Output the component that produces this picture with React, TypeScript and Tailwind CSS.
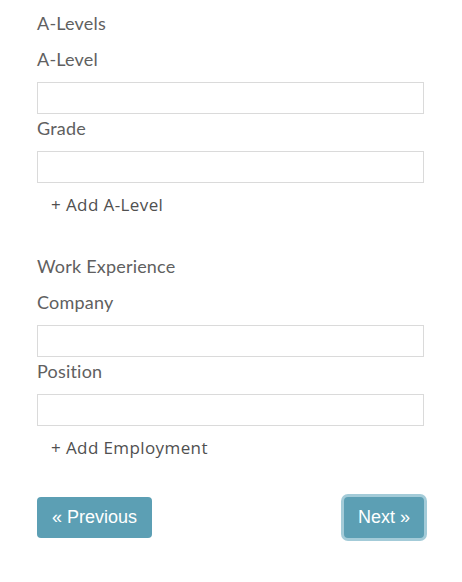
import React from 'react';

const label = "block text-[18px] leading-[21px] tracking-[0.2px] text-[#606060] font-['Lato',sans-serif]";
const input = 'block w-full h-8 border border-[#dadada] bg-white outline-none';
const addLink = "pl-[14px] text-[17px] leading-[22px] tracking-[0.4px] text-[#505050] font-['Open_Sans',sans-serif]";

const Section = ({ title, fields, add }: { title: string; fields: string[]; add: string }) => (
  <div>
    <h3 className={`${label} mb-[15px]`}>{title}</h3>
    {fields.map((f, i) => (
      <div key={i} className={i > 0 ? 'mt-1' : ''}>
        <label className={`${label} mb-[12px]`}>{f}</label>
        <input className={input} />
      </div>
    ))}
    <div className={`${addLink} mt-[11px]`}>+ {add}</div>
  </div>
);

const App = () => {
  return (
    <div className="bg-white min-h-screen px-[37px] pr-[38px] pt-[13px]">
      <Section title="A-Levels" fields={['A-Level', 'Grade']} add="Add A-Level" />
      <div className="mt-10">
        <Section title="Work Experience" fields={['Company', 'Position']} add="Add Employment" />
      </div>
      <div className="mt-[38px] flex justify-between items-center">
        <button className="h-[41px] px-[15px] rounded bg-[#5c9fb4] text-white text-[18px] font-['Liberation_Sans',sans-serif]">
          « Previous
        </button>
        <button className="h-[41px] px-[14px] rounded bg-[#5c9fb4] text-white text-[18px] font-['Liberation_Sans',sans-serif] ring-[3px] ring-[#a3cbd8]">
          Next »
        </button>
      </div>
    </div>
  );
};

export default App;
